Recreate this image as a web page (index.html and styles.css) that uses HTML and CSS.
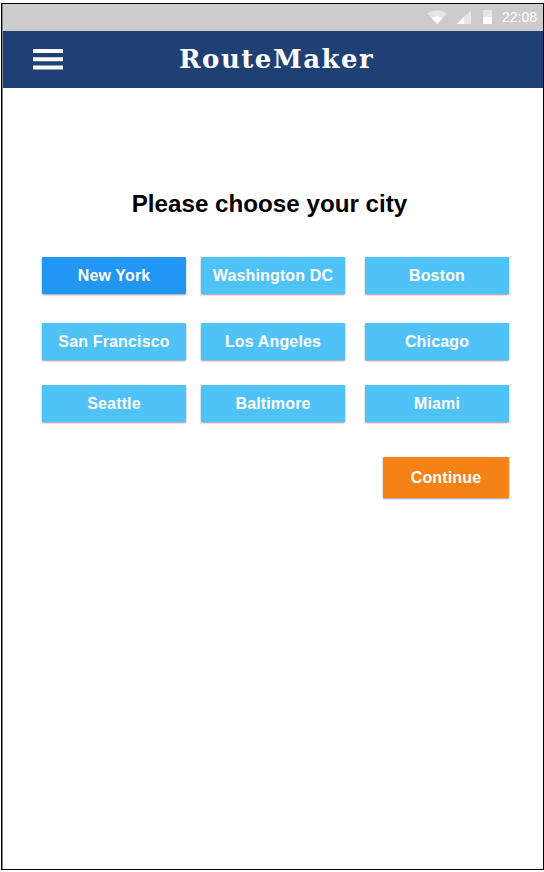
FILE: index.html
```html
<!DOCTYPE html>
<html lang="en">
<head>
<meta charset="utf-8">
<title>RouteMaker</title>
<link rel="stylesheet" href="styles.css">
</head>
<body>
<div class="screen">
  <div class="status">
    <svg class="wifi" width="20" height="14" viewBox="0 0 20 14"><path d="M.2 3.5Q10 -2.8 19.8 3.5L10 14Z" fill="#e6e6e6"/><path d="M4.5 8.1Q10 4.9 15.5 8.1L10 14Z" fill="#fff"/></svg>
    <svg class="signal" width="14" height="14" viewBox="0 0 14 14"><path d="M14 0V14H0Z" fill="#e6e6e6"/><path d="M7 7V14H0Z" fill="#fff"/></svg>
    <svg class="battery" width="9" height="14" viewBox="0 0 9 14"><path d="M0 0H9V7H0Z" fill="#e6e6e6"/><path d="M0 7H9V14H0Z" fill="#fff"/></svg>
    <span class="time">22:08</span>
  </div>
  <header class="bar">
    <svg class="menu" width="30" height="21" viewBox="0 0 30 21"><path d="M0 0H30V4H0ZM0 8.3H30V12.3H0ZM0 16.5H30V20.5H0Z" fill="#fff"/></svg>
    <span class="brand">RouteMaker</span>
  </header>
  <main class="content">
    <h1 class="title">Please choose your city</h1>
    <div class="cities">
      <button class="city selected">New York</button><button class="city">Washington DC</button><button class="city">Boston</button>
      <button class="city">San Francisco</button><button class="city">Los Angeles</button><button class="city">Chicago</button>
      <button class="city">Seattle</button><button class="city">Baltimore</button><button class="city">Miami</button>
    </div>
    <button class="continue">Continue</button>
  </main>
</div>
</body>
</html>
```
FILE: styles.css
```css
* { box-sizing: border-box; }
body { margin: 0; background: #fff; font-family: "Liberation Sans", Arial, sans-serif; }
.screen { width: 543px; height: 867px; margin: 3px 0 0 1px; border: 1px solid #000; box-shadow: inset 1px 0 #888, 0 1px #bbb; padding-left: 1px; overflow: hidden; }
.status { height: 27px; background: #ccc; display: flex; align-items: center; justify-content: flex-end; padding-right: 6px; color: #fff; }
.status svg { margin-bottom: 1px; }
.wifi { margin-right: 10px; }
.signal { margin-right: 12px; }
.battery { margin-right: 10px; }
.time { font: 14px/27px "Liberation Sans", Arial, sans-serif; width: 35px; white-space: nowrap; }
.bar { height: 57px; background: #1f4074; display: flex; align-items: center; padding-left: 30px; }
.brand { margin-left: 116px; font: bold 26px/57px "DejaVu Serif", serif; letter-spacing: 1.5px; color: #fff; }
.content { padding: 99px 34px 0 39px; display: flex; flex-direction: column; }
.title { margin: 0; font-size: 24.2px; line-height: 34px; text-align: center; padding-right: 12px; }
.cities { margin-top: 36px; display: grid; grid-template-columns: 159px 164px 144px; grid-template-rows: 66px 62px 37px; align-items: start; }
button { border: 0; padding: 0; border-radius: 1px; color: #fff; font: bold 16px/18px "Liberation Sans", Arial, sans-serif; letter-spacing: .15px; box-shadow: 0 1px 2px rgba(0,0,0,.4); }
.city { width: 144px; height: 37px; background: #4fc3f7; }
.selected { background: #2196f3; }
.continue { align-self: flex-end; width: 126px; height: 41px; margin-top: 35px; background: #f58216; }
```
